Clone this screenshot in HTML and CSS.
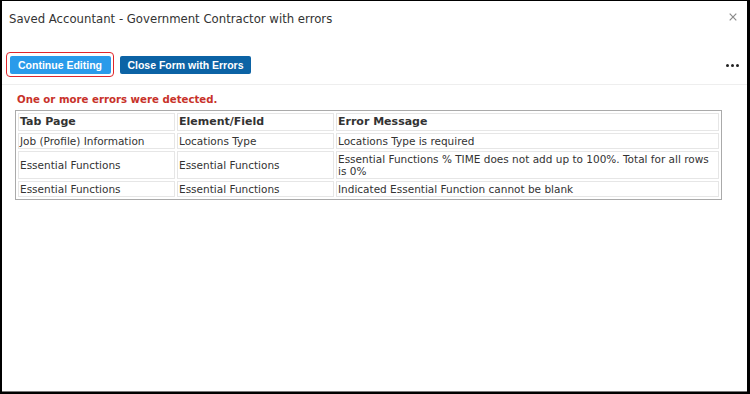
FILE: index.html
```html
<!DOCTYPE html>
<html>
<head>
<meta charset="utf-8">
<link rel="stylesheet" href="styles.css">
</head>
<body>
<div class="frame">
  <div class="dialog">
    <div class="header">
      <div class="title">Saved Accountant - Government Contractor with errors</div>
      <div class="close">
        <svg width="8" height="8" viewBox="0 0 8 8"><path d="M0.7 0.7L7.3 7.3M7.3 0.7L0.7 7.3" stroke="#8a8a8a" stroke-width="1.2"/></svg>
      </div>
    </div>
    <div class="toolbar">
      <div class="buttons">
        <div class="focus-ring"><button class="btn btn-light">Continue Editing</button></div>
        <button class="btn btn-dark">Close Form with Errors</button>
      </div>
      <div class="more"><span></span><span></span><span></span></div>
    </div>
    <div class="content">
      <div class="error-msg">One or more errors were detected.</div>
      <table class="errors">
        <thead>
          <tr><th class="c1">Tab Page</th><th class="c2">Element/Field</th><th>Error Message</th></tr>
        </thead>
        <tbody>
          <tr><td>Job (Profile) Information</td><td>Locations Type</td><td>Locations Type is required</td></tr>
          <tr><td>Essential Functions</td><td>Essential Functions</td><td>Essential Functions % TIME does not add up to 100%. Total for all rows is 0%</td></tr>
          <tr><td>Essential Functions</td><td>Essential Functions</td><td>Indicated Essential Function cannot be blank</td></tr>
        </tbody>
      </table>
    </div>
  </div>
</div>
</body>
</html>
```
FILE: styles.css
```css
* { box-sizing: border-box; }
html, body { margin: 0; padding: 0; background: #000; }
.frame {
  width: 750px;
  height: 394px;
  padding: 1px 3px 2px 2px;
  background: #000;
}
.dialog {
  height: 100%;
  background: #fff;
  border-bottom: 1px solid #777;
  font-family: "DejaVu Sans", Verdana, sans-serif;
  color: #333;
}
.header {
  display: flex;
  justify-content: space-between;
  align-items: flex-start;
  padding: 11px 10px 0 7px;
  height: 49px;
}
.title {
  font-size: 11.7px;
  color: #333;
}
.close { padding-top: 1px; line-height: 0; }
.toolbar {
  display: flex;
  justify-content: space-between;
  align-items: center;
  padding: 0 8px 0 4px;
  height: 35px;
  border-bottom: 1px solid #eee;
}
.buttons { display: flex; align-items: center; gap: 6px; margin-top: -5px; }
.focus-ring {
  border: 1.5px solid #e0262b;
  border-radius: 4px;
  padding: 2.5px;
}
.btn {
  border: 0;
  border-radius: 2px;
  color: #fff;
  font-family: "Liberation Sans", Arial, sans-serif;
  font-weight: bold;
  font-size: 10.5px;
  height: 18px;
  padding: 0;
  white-space: nowrap;
  display: flex;
  align-items: center;
  justify-content: center;
}
.btn-light { background: #2a9bea; width: 101px; }
.btn-dark { background: #0c63a5; width: 131px; }
.more { display: flex; gap: 2px; margin-top: -3px; }
.more span { width: 3px; height: 3px; background: #222; border-radius: 50%; }
.content { padding: 9px 0 0 13px; }
.error-msg {
  color: #c8322a;
  font-weight: bold;
  font-size: 10.2px;
  margin: 0 0 5px 2px;
}
.errors {
  width: 707px;
  border: 1px solid #aaa;
  border-spacing: 2px;
  font-size: 10.5px;
  color: #333;
}
.errors th, .errors td {
  border: 1px solid #e6e6e6;
  text-align: left;
  vertical-align: middle;
  padding: 1px 1px;
  line-height: 12px;
}
.errors th { font-weight: bold; font-size: 11px; height: 18px; }
.errors td { height: 16px; }
.errors .c1 { width: 157px; }
.errors .c2 { width: 157px; }
```
